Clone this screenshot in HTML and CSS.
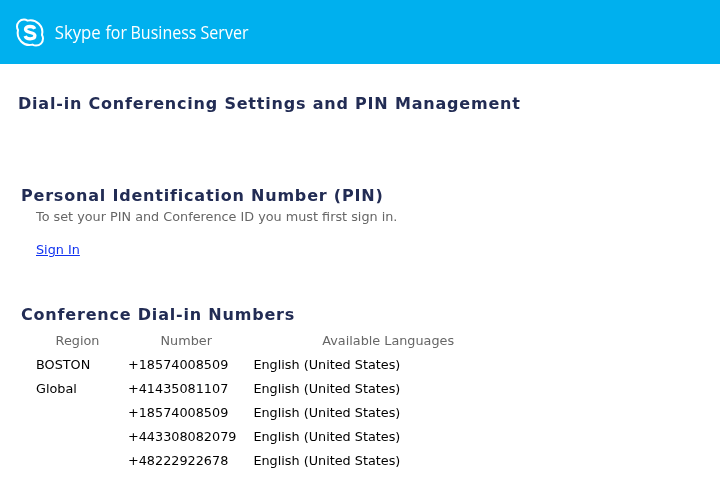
FILE: index.html
```html
<!DOCTYPE html>
<html lang="en">
<head>
<meta charset="utf-8">
<title>Dial-in Conferencing Settings and PIN Management</title>
<link rel="stylesheet" href="styles.css">
</head>
<body>
<header class="banner">
<svg class="logo" viewBox="0 -.6 28 28" width="28" height="28" aria-hidden="true"><path d="M8 1C4 1 1 4 1 8c0 1.300.4 2.500 1 3.500A12 12 0 0 0 16.500 26c1 .6 2.200 1 3.500 1 4 0 7-3 7-7 0-1.300-.4-2.500-1-3.500A12 12 0 0 0 11.500 2C10.500 1.400 9.300 1 8 1Z" fill="none" stroke="#fff" stroke-width="2"/><path d="M18.700 10.300C18 8.400 16.200 7.900 14 7.900c-2.800 0-4.500 1-4.500 2.800 0 4.300 9.400 2.100 9.400 6.300 0 2.200-2 3.200-4.800 3.200-2.500 0-4.300-.7-5-2.800" fill="none" stroke="#fff" stroke-width="3.300"/></svg>
<svg class="wordmark" width="200" height="30"><text x="-.3" y="22" textLength="46" lengthAdjust="spacingAndGlyphs">Skype</text><text x="50.500" y="22" textLength="21.500" lengthAdjust="spacingAndGlyphs">for</text><text x="75.500" y="22" textLength="66" lengthAdjust="spacingAndGlyphs">Business</text><text x="145.500" y="22" textLength="48" lengthAdjust="spacingAndGlyphs">Server</text></svg>
</header>
<main>
<h1>Dial-in Conferencing Settings and PIN Management</h1>
<section class="pin">
<h2>Personal Identification Number (PIN)</h2>
<p>To set your PIN and Conference ID you must first sign in.</p>
<a href="#">Sign In</a>
</section>
<section class="numbers">
<h2>Conference Dial-in Numbers</h2>
<table>
<thead><tr><th class="region">Region</th><th class="number">Number</th><th class="languages">Available Languages</th></tr></thead>
<tbody>
<tr><td>BOSTON</td><td>+18574008509</td><td>English (United States)</td></tr>
<tr><td>Global</td><td>+41435081107</td><td>English (United States)</td></tr>
<tr><td></td><td>+18574008509</td><td>English (United States)</td></tr>
<tr><td></td><td>+443308082079</td><td>English (United States)</td></tr>
<tr><td></td><td>+48222922678</td><td>English (United States)</td></tr>
</tbody>
</table>
</section>
</main>
</body>
</html>
```
FILE: styles.css
```css
body { margin: 0; background: #fff; color: #666; font: 12.8px/16px "DejaVu Sans", sans-serif; overflow: hidden; }
.banner { height: 64px; background: #00b0ee; display: flex; align-items: center; gap: 11px; padding-left: 16px; box-sizing: border-box; }
.logo { overflow: visible; }
.wordmark { overflow: visible; fill: #fff; font: 18px "Open Sans", sans-serif; will-change: transform; }
main { will-change: transform; }
h1, h2 { margin: 0; color: #222c54; font-size: 16px; line-height: 20px; font-weight: bold; letter-spacing: .8px; white-space: nowrap; }
h1 { padding: 30px 0 0 18px; }
.pin { padding: 72px 0 0 21px; }
.pin p { margin: 3px 0 17px 15px; }
.pin a { margin-left: 15px; color: #0f31f0; }
.numbers { padding: 47px 0 0 21px; }
table { margin: 4px 0 0 15px; border-collapse: collapse; table-layout: fixed; width: 487px; }
th, td { height: 24px; padding: 0; white-space: nowrap; }
th { font-weight: normal; text-align: center; }
td { color: #000; }
.region { width: 83px; padding-right: 9px; }
.number { width: 116.4px; padding-right: 9px; }
```
